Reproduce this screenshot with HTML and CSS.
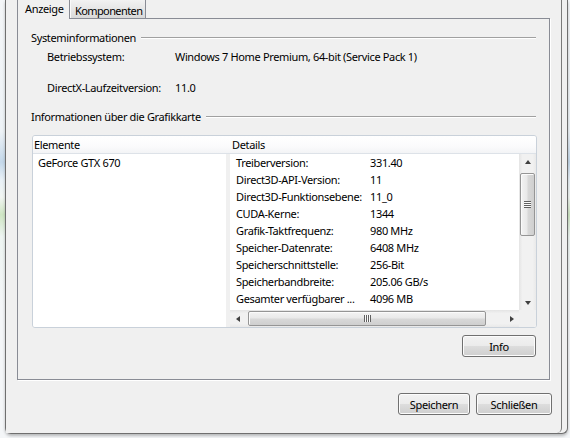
FILE: index.html
```html
<!DOCTYPE html>
<html lang="de">
<head>
    <meta charset="UTF-8">
    <title>DirectX-Diagnoseprogramm</title>
    <link rel="stylesheet" href="styles.css">
</head>
<body>
    <div class="desktop">
        <div class="frame">
            <div class="client">
                <div class="tabs">
                    <div class="tab active">Anzeige</div>
                    <div class="tab">Komponenten</div>
                </div>

                <div class="panel">
                    <div class="group-title">Systeminformationen</div>
                    <div class="sys-row first"><span class="sys-key">Betriebssystem:</span><span>Windows 7 Home Premium, 64-bit (Service Pack 1)</span></div>
                    <div class="sys-row second"><span class="sys-key">DirectX-Laufzeitversion:</span><span>11.0</span></div>

                    <div class="group-title second">Informationen über die Grafikkarte</div>

                    <div class="listbox">
                        <div class="list-head">
                            <div class="col-a">Elemente</div>
                            <div class="col-b">Details</div>
                        </div>
                        <div class="list-body">
                            <div class="pane-left">
                                <div class="item">GeForce GTX 670</div>
                            </div>
                            <div class="splitter"></div>
                            <div class="pane-right">
                                <div class="detail-rows">
                                    <span>Treiberversion:</span><span>331.40</span>
                                    <span>Direct3D-API-Version:</span><span>11</span>
                                    <span>Direct3D-Funktionsebene:</span><span>11_0</span>
                                    <span>CUDA-Kerne:</span><span>1344</span>
                                    <span>Grafik-Taktfrequenz:</span><span>980 MHz</span>
                                    <span>Speicher-Datenrate:</span><span>6408 MHz</span>
                                    <span>Speicherschnittstelle:</span><span>256-Bit</span>
                                    <span>Speicherbandbreite:</span><span>205.06 GB/s</span>
                                    <span>Gesamter verfügbarer ...</span><span>4096 MB</span>
                                </div>
                                <div class="vscroll">
                                    <div class="sb-btn"><i class="arrow up"></i></div>
                                    <div class="thumb v"><i class="grip"></i></div>
                                    <div class="sb-btn end"><i class="arrow down"></i></div>
                                </div>
                                <div class="hscroll">
                                    <div class="sb-btn"><i class="arrow left"></i></div>
                                    <div class="thumb h"><i class="grip"></i></div>
                                    <div class="sb-btn end"><i class="arrow right"></i></div>
                                </div>
                                <div class="corner"></div>
                            </div>
                        </div>
                    </div>

                    <div class="info-line">
                        <button class="btn info">Info</button>
                    </div>
                </div>

                <div class="footer">
                    <button class="btn save">Speichern</button>
                    <button class="btn close">Schließen</button>
                </div>
            </div>
        </div>
    </div>
</body>
</html>
```

FILE: styles.css
```css
body {
    margin: 0;
    width: 570px;
    height: 438px;
    overflow: hidden;
    font-family: 'Noto Sans', 'Segoe UI', sans-serif;
    font-size: 11px;
    letter-spacing: -0.35px;
    color: #000;
    background: linear-gradient(180deg, #f4f6f8 0%, #eef3f7 30%, #c4d8ea 37%, #e9f1f7 41%, #f2f6f3 45%, #cfe6c4 49%, #eef5f2 54%, #f4f6f8 70%, #f4f6f8 100%);
}

.desktop {
    padding-left: 5px;
    height: 438px;
    box-sizing: border-box;
}

/* outer window frame, cut off at the top */
.frame {
    width: 563px;
    height: 434px;
    box-sizing: border-box;
    border: 1px solid #6f6f6f;
    border-top: none;
    border-radius: 0 0 6px 6px;
    padding-right: 5px;
    background: #f0f0f0;
    box-shadow: 0 2px 3px rgba(0, 0, 0, 0.25);
}

.client {
    height: 433px;
    box-sizing: border-box;
    border-right: 1px solid #7a7a7a;
    border-bottom-right-radius: 5px;
    padding-left: 11px;
    background: #f0f0f0;
    display: flex;
    flex-direction: column;
}

/* tabs */
.tabs {
    display: flex;
    height: 18px;
}

.tab {
    box-sizing: border-box;
    height: 18px;
    line-height: 17px;
    white-space: nowrap;
}

.tab.active {
    width: 53px;
    height: 19px;
    padding-left: 7px;
    border-left: 1px solid #898c95;
    border-right: 1px solid #898c95;
    background: #f0f0f0;
    position: relative;
    z-index: 1;
}

.tab:not(.active) {
    width: 76px;
    padding: 2px 0 0 5px;
    letter-spacing: -0.6px;
    border-right: 1px solid #898c95;
    background: linear-gradient(180deg, #f2f2f2 0%, #e6e6e6 50%, #d9d9d9 100%);
    box-shadow: inset 1px 0 0 #fafafa;
}

/* tab page */
.panel {
    width: 533px;
    height: 362px;
    box-sizing: border-box;
    border: 1px solid #898c95;
    padding: 0 13px;
    background: #f0f0f0;
    box-shadow: 1px 1px 0 #fff;
}

.group-title {
    display: flex;
    align-items: center;
    height: 15px;
    line-height: 15px;
    margin-top: 11px;
    white-space: nowrap;
}

.group-title::after {
    content: '';
    flex: 1;
    margin-left: 5px;
    border-top: 1px solid #a0a0a0;
    border-bottom: 1px solid #fff;
}

.group-title.second {
    margin-top: 14px;
}

.sys-row {
    display: flex;
    height: 15px;
    line-height: 15px;
    padding-left: 16px;
}

.sys-row.first { margin-top: 4px; }
.sys-row.second { margin-top: 16px; }

.sys-key {
    width: 128px;
}

/* list views */
.listbox {
    margin: 11px 0 0 1px;
    width: 505px;
    height: 193px;
    box-sizing: border-box;
    border: 1px solid #c9d1da;
    border-radius: 3px;
    background: #f0f0f0;
    overflow: hidden;
}

.list-head {
    display: flex;
    height: 17px;
    line-height: 17px;
    border-bottom: 1px solid #dde2e8;
    background: linear-gradient(180deg, #ffffff 0%, #fbfbfc 60%, #f3f4f6 100%);
}

.col-a {
    width: 195px;
    padding-left: 1px;
}

.col-b {
    padding-left: 3px;
}

.list-body {
    display: flex;
    height: 173px;
}

.pane-left {
    width: 193px;
    background: #fff;
}

.item {
    height: 17px;
    line-height: 18px;
    padding-left: 5px;
}

.splitter {
    width: 4px;
    background: #f0f0f0;
}

.pane-right {
    width: 306px;
    display: grid;
    grid-template-columns: 289px 17px;
    grid-template-rows: 156px 17px;
    background: #fff;
}

.detail-rows {
    display: grid;
    grid-template-columns: 134px auto;
    grid-auto-rows: 17px;
    line-height: 18px;
    padding-left: 6px;
    overflow: hidden;
    white-space: nowrap;
}

/* scrollbars */
.vscroll,
.hscroll {
    display: flex;
    background: linear-gradient(90deg, #e4e4e4 0%, #f1f1f1 20%, #f1f1f1 80%, #e9e9e9 100%);
}

.vscroll {
    flex-direction: column;
}

.hscroll {
    background: linear-gradient(180deg, #e4e4e4 0%, #f1f1f1 20%, #f1f1f1 80%, #e9e9e9 100%);
}

.sb-btn {
    width: 17px;
    height: 17px;
    flex: none;
    display: flex;
    align-items: center;
    justify-content: center;
}

.vscroll .sb-btn.end {
    margin-top: auto;
}

.hscroll .sb-btn.end {
    margin-left: auto;
}

.arrow {
    width: 0;
    height: 0;
    border: 4px solid transparent;
}

.arrow.up { border-bottom-color: #404040; border-top-width: 0; margin-top: -2px; }
.arrow.down { border-top-color: #404040; border-bottom-width: 0; margin-top: 2px; }
.arrow.left { border-right-color: #404040; border-left-width: 0; margin-left: -2px; }
.arrow.right { border-left-color: #404040; border-right-width: 0; margin-left: 2px; }

.arrow.up,
.arrow.down {
    border-left-width: 3px;
    border-right-width: 3px;
}

.arrow.left,
.arrow.right {
    border-top-width: 3px;
    border-bottom-width: 3px;
}

.thumb {
    box-sizing: border-box;
    border: 1px solid #959595;
    border-radius: 2px;
    display: flex;
    align-items: center;
    justify-content: center;
    box-shadow: inset 1px 1px 0 #fbfbfb;
}

.thumb.v {
    width: 15px;
    height: 63px;
    margin: 2px 0 0 1px;
    background: linear-gradient(90deg, #f3f3f3 0%, #e9e9e9 45%, #d8d8d8 55%, #cfcfcf 100%);
}

.thumb.h {
    width: 238px;
    height: 15px;
    margin: 1px 0 0 1px;
    background: linear-gradient(180deg, #f3f3f3 0%, #e9e9e9 45%, #d8d8d8 55%, #cfcfcf 100%);
}

.thumb.v .grip {
    width: 7px;
    height: 7px;
    background: repeating-linear-gradient(180deg, #606060 0px, #606060 1px, #fafafa 1px, #fafafa 2px);
}

.thumb.h .grip {
    width: 7px;
    height: 7px;
    background: repeating-linear-gradient(90deg, #606060 0px, #606060 1px, #fafafa 1px, #fafafa 2px);
}

.corner {
    background: #f0f0f0;
}

/* push buttons */
.btn {
    box-sizing: border-box;
    height: 22px;
    padding: 0;
    border: 1px solid #707070;
    border-radius: 3px;
    font: inherit;
    letter-spacing: inherit;
    color: #000;
    background: linear-gradient(180deg, #f2f2f2 0%, #ebebeb 50%, #dddddd 50%, #cfcfcf 100%);
    box-shadow: inset 0 0 0 1px #fcfcfc;
}

.info-line {
    display: flex;
    justify-content: flex-end;
    margin-top: 7px;
}

.btn.info { width: 74px; }

.footer {
    display: flex;
    justify-content: flex-end;
    gap: 6px;
    margin-top: 13px;
    padding-right: 9px;
}

.btn.save { width: 72px; }
.btn.close { width: 76px; }
```
